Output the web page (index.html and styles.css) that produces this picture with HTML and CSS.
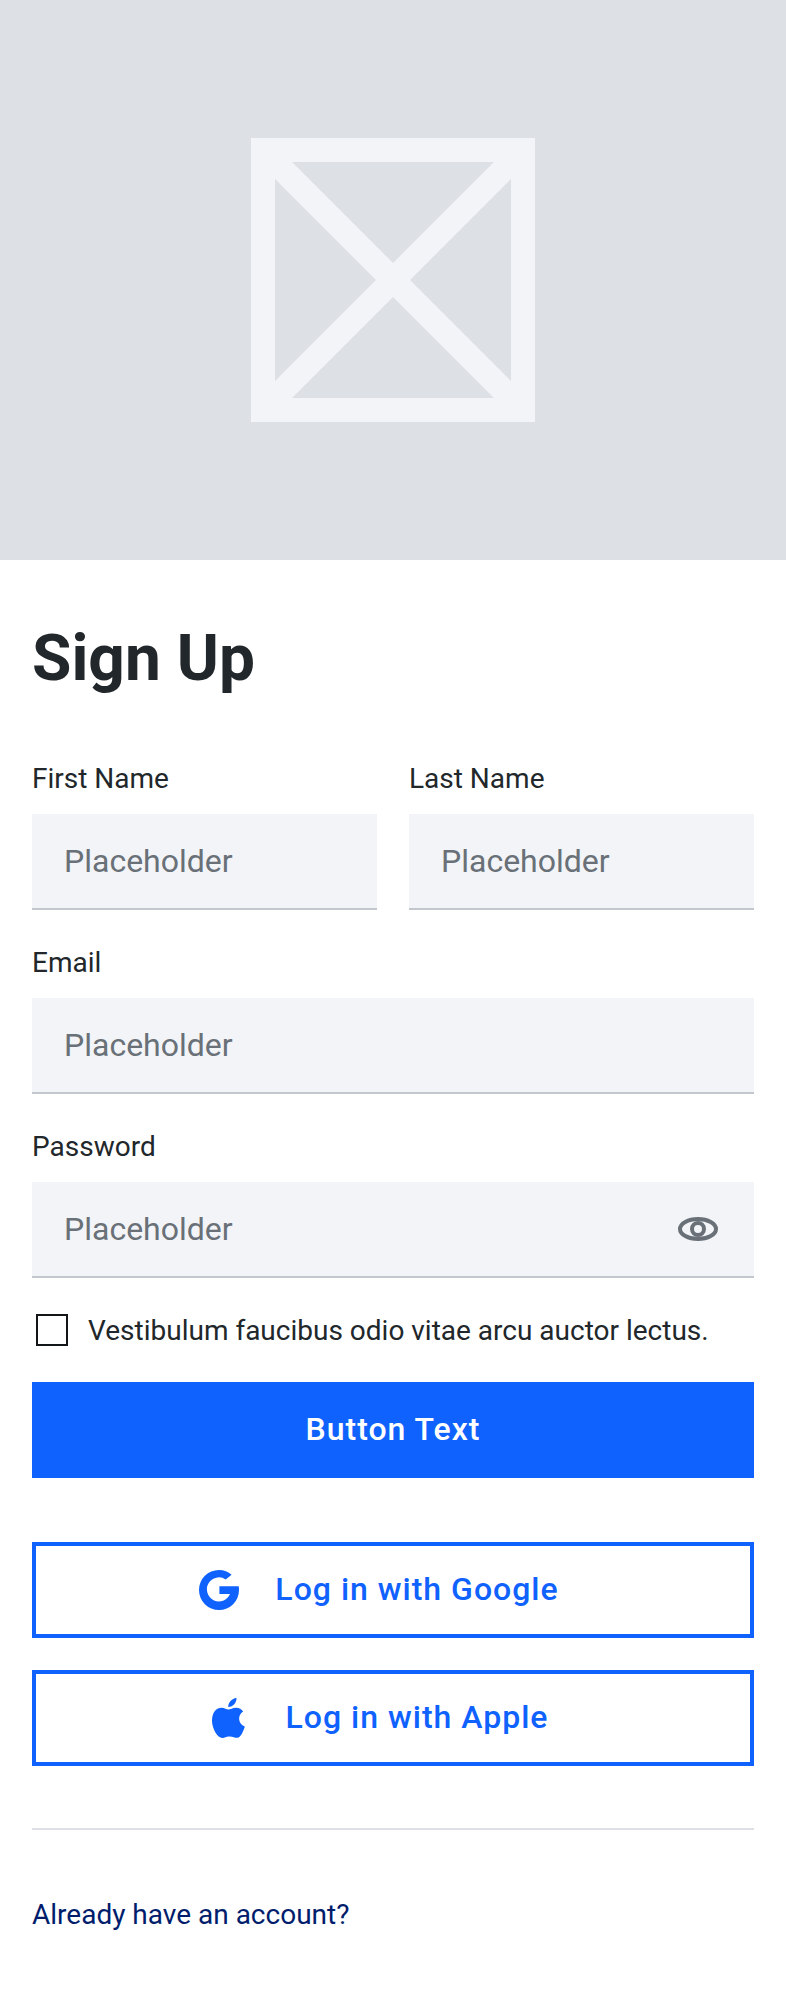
FILE: index.html
```html
<!DOCTYPE html>
<html lang="en">
<head>
<meta charset="utf-8">
<title>Sign Up</title>
<link rel="stylesheet" href="styles.css">
</head>
<body>
<div class="hero">
  <svg class="hero-mark" viewBox="0 0 284 284" aria-hidden="true">
    <path d="M12 12H272V272H12ZM12 12L272 272M272 12L12 272" fill="none" stroke="currentColor" stroke-width="24"/>
  </svg>
</div>
<main class="content">
  <h1 class="title">Sign Up</h1>
  <form class="form">
    <div class="row">
      <label class="field"><span class="label">First Name</span><span class="box"><input class="input" type="text" placeholder="Placeholder"></span></label>
      <label class="field"><span class="label">Last Name</span><span class="box"><input class="input" type="text" placeholder="Placeholder"></span></label>
    </div>
    <label class="field"><span class="label">Email</span><span class="box"><input class="input" type="email" placeholder="Placeholder"></span></label>
    <label class="field"><span class="label">Password</span><span class="box"><input class="input" type="password" placeholder="Placeholder">
      <svg class="eye" viewBox="0 0 48 48" aria-hidden="true"><g fill="none" stroke="currentColor" stroke-width="4"><ellipse cx="24" cy="24" rx="18" ry="10"/><circle cx="24" cy="24" r="6"/></g></svg></span></label>
    <label class="check"><input class="checkbox" type="checkbox"><span class="label">Vestibulum faucibus odio vitae arcu auctor lectus.</span></label>
    <button class="button primary" type="button"><span class="button-text">Button Text</span></button>
  </form>
  <div class="social">
    <button class="button outline" type="button">
      <svg class="icon" viewBox="0 0 48 48" aria-hidden="true"><path fill="currentColor" d="M24.400 20.200H43.700C44 21.500 44 22.700 44 24A20 20 0 1 1 24 4C29 4 33.200 5.800 36.600 8.700L30.700 13.500A12 12 0 1 0 35 28H24.400Z"/></svg>
      <span class="button-text">Log in with Google</span>
    </button>
    <button class="button outline" type="button">
      <svg class="icon" viewBox="1 0 48 48" aria-hidden="true"><path fill="currentColor" d="M31.500 4C31.700 8.500 28.200 13 23.300 13C22.900 8.800 26.800 4.500 31.500 4ZM23.400 15.500C25.600 15.500 27.500 13.700 31 13.700C34.200 13.700 36.700 15.200 38.200 17.400C32.300 21 32.800 29.500 39.800 32.500C38.600 36.500 35.800 43.800 32.500 43.800C29.400 43.800 28.200 42.400 24.500 42.400C20.700 42.400 19.900 44 17.200 44C12.800 44 7 35 7 26.500C7 18 11.500 13.700 16.500 13.700C19.800 13.700 21.500 15.500 23.400 15.500Z"/></svg>
      <span class="button-text">Log in with Apple</span>
    </button>
  </div>
  <hr class="divider">
  <a class="link label" href="#">Already have an account?</a>
</main>
</body>
</html>
```
FILE: styles.css
```css
* { box-sizing: border-box; }
body { margin: 0; background: #fff; color: #21272a; font-family: Roboto, sans-serif; font-size: 28px; line-height: 40px; }
.hero { height: 560px; display: flex; align-items: center; justify-content: center; background: #dde1e6; }
.hero-mark { width: 284px; height: 284px; color: #f2f4f8; }
.content { display: flex; flex-direction: column; padding: 64px 32px; }
.title { margin: 0 0 64px; font-size: 64px; font-weight: 700; line-height: 70px; }
.form { display: flex; flex-direction: column; gap: 32px; }
.row { display: grid; grid-template-columns: repeat(2, minmax(0, 1fr)); gap: 32px; }
.field { display: flex; flex-direction: column; gap: 16px; min-width: 0; }
.label { display: block; height: 40px; line-height: 42px; }
.box { display: flex; align-items: center; height: 96px; padding: 0 32px; background: #f2f4f8; border-bottom: 2px solid #c1c7cd; }
.input { flex: 1; width: 0; min-width: 0; height: 45px; padding: 0; border: 0; outline: 0; background: none; color: inherit; font: 400 32px/45px Roboto, sans-serif; }
.input::placeholder { color: #697077; opacity: 1; }
.eye { flex: none; width: 48px; height: 48px; color: #697077; }
.check { display: flex; align-items: center; gap: 20px; padding-left: 4px; }
.checkbox { appearance: none; flex: none; width: 32px; height: 32px; margin: 0; border: 2px solid #121619; background: #fff; }
.button { display: flex; align-items: center; justify-content: center; width: 100%; height: 96px; padding: 0; border: 4px solid #0f62fe; font: 500 32px/32px Roboto, sans-serif; letter-spacing: 1px; }
.button-text { padding-bottom: 2px; }
.primary { background: #0f62fe; color: #fff; }
.outline { gap: 32px; padding-right: 32px; background: #fff; color: #0f62fe; }
.icon { width: 48px; height: 48px; flex: none; }
.social { display: flex; flex-direction: column; gap: 32px; margin-top: 64px; }
.divider { width: 100%; height: 2px; margin: 62px 0 64px; border: 0; background: #dde1e6; }
.link { color: #001d6c; text-decoration: none; }
```
